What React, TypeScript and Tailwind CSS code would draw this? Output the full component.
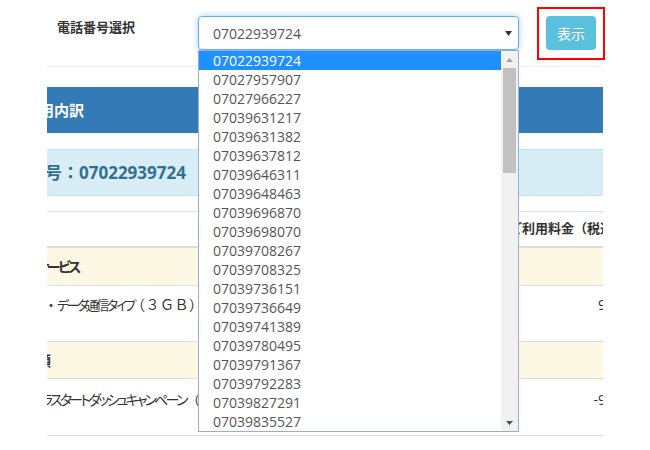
import React from "react";

const numbers = [
  "07022939724",
  "07027957907",
  "07027966227",
  "07039631217",
  "07039631382",
  "07039637812",
  "07039646311",
  "07039648463",
  "07039696870",
  "07039698070",
  "07039708267",
  "07039708325",
  "07039736151",
  "07039736649",
  "07039741389",
  "07039780495",
  "07039791367",
  "07039792283",
  "07039827291",
  "07039835527",
];

function PhoneDropdown() {
  return (
    <div className="absolute left-[198px] top-[50px] flex h-[382px] w-[321px] border border-[#94afd9] bg-white">
      <ul className="flex-1 overflow-hidden">
        {numbers.map((n, i) => (
          <li
            key={n}
            className={
              i === 0
                ? "h-[19px] bg-[#1e90ff] pl-[14px] text-[14px] leading-[19px] text-white"
                : "h-[19px] pl-[14px] text-[14px] leading-[19px] text-[#555]"
            }
          >
            {n}
          </li>
        ))}
      </ul>
      <div className="flex w-[17px] flex-col bg-[#f1f1f1]">
        <div className="flex h-[17px] items-center justify-center">
          <svg width="7" height="4" viewBox="0 0 7 4">
            <path d="M0 4 L3.5 0 L7 4 Z" fill="#a3a3a3" />
          </svg>
        </div>
        <div className="mx-[2px] h-[105px] bg-[#c1c1c1]" />
        <div className="flex-1" />
        <div className="flex h-[17px] items-center justify-center">
          <svg width="7" height="4" viewBox="0 0 7 4">
            <path d="M0 0 L7 0 L3.5 4 Z" fill="#505050" />
          </svg>
        </div>
      </div>
    </div>
  );
}

export default function App() {
  return (
    <div className="relative h-[450px] w-[650px] overflow-hidden bg-white font-['Open_Sans','Noto_Sans_CJK_JP',sans-serif] text-[#333]">
      {/* 検索フォーム */}
      <div className="flex h-[66px] items-start pl-[57px]">
        <label className="mt-[17px] w-[141px] text-[13px] font-bold leading-[20px]">
          電話番号選択
        </label>
        <div className="mt-[16px] flex h-[34px] w-[321px] items-center justify-between rounded-[4px] border border-[#66afe9] bg-white pl-[14px] pr-[6px] shadow-[0_0_6px_rgba(102,175,233,0.6)]">
          <span className="text-[14px] text-[#555]">07022939724</span>
          <svg width="7" height="5" viewBox="0 0 7 5">
            <path d="M0 0 L7 0 L3.5 5 Z" fill="#333" />
          </svg>
        </div>
        <div className="ml-[18px] mt-[7px] h-[53px] w-[68px] border-2 border-[#ff0000] pl-[7px] pt-[7px]">
          <button className="flex h-[34px] w-[50px] items-center justify-center rounded-[4px] bg-[#5bc0de] text-[14px] text-white">
            表示
          </button>
        </div>
      </div>

      {/* 明細 */}
      <div className="ml-[47px] w-[556px] overflow-hidden border-t border-[#eee]">
        <div className="mt-[20px] flex h-[46px] items-center whitespace-nowrap bg-[#337ab7] text-[15px] font-bold text-white">
          <span className="-ml-[38px]">ご利用内訳</span>
        </div>

        <div className="mt-[16px] flex h-[47px] items-center whitespace-nowrap border-y border-[#bce8f1] bg-[#d9edf7] text-[17px] font-bold text-[#31708f]">
          <span className="-ml-[53px]">電話番号：07022939724</span>
        </div>

        <div className="mt-[15px] border-t border-[#cde6f0]">
          <div className="flex h-[36px] items-center whitespace-nowrap border-b-2 border-[#ddd] pl-[462px] text-[13px] font-bold">
            ご利用料金（税込）
          </div>
          <div className="flex h-[38px] items-center whitespace-nowrap border-b border-[#ddd] bg-[#fcf8e3] text-[14px] font-bold">
            <span className="-ml-[11px] tracking-[-2.5px] [font-feature-settings:'palt']">サービス</span>
          </div>
          <div className="flex h-[56px] items-start justify-between whitespace-nowrap border-b border-[#ddd] pt-[9px] text-[14px] leading-[20px]">
            <span className="-ml-[3px] flex items-baseline">
              <span className="w-[13px]">・</span>
              <span className="w-[74px] text-[13px] tracking-[-2.5px] [font-feature-settings:'palt']">データ通信タイプ</span>
              <span className="tracking-[0.5px]">（３ＧＢ）</span>
            </span>
            <span className="-mr-[19px]">980</span>
          </div>
          <div className="flex h-[37px] items-center whitespace-nowrap border-b border-[#ddd] bg-[#fcf8e3] text-[14px] font-bold">
            <span className="-ml-[24px]">金額</span>
          </div>
          <div className="flex h-[57px] items-start justify-between whitespace-nowrap border-b border-[#ddd] pt-[11px] text-[14px] leading-[20px]">
            <span className="-ml-[17px] flex">
              <span className="flex w-[20px] justify-end tracking-[-2.8px] [font-feature-settings:'palt']">プラ</span>
              <span className="w-[136px] tracking-[-2.8px] [font-feature-settings:'palt']">スタートダッシュキャンペーン</span>
              <span>（４月）</span>
            </span>
            <span className="-mr-[19px]">-980</span>
          </div>
        </div>
      </div>

      <PhoneDropdown />
    </div>
  );
}
